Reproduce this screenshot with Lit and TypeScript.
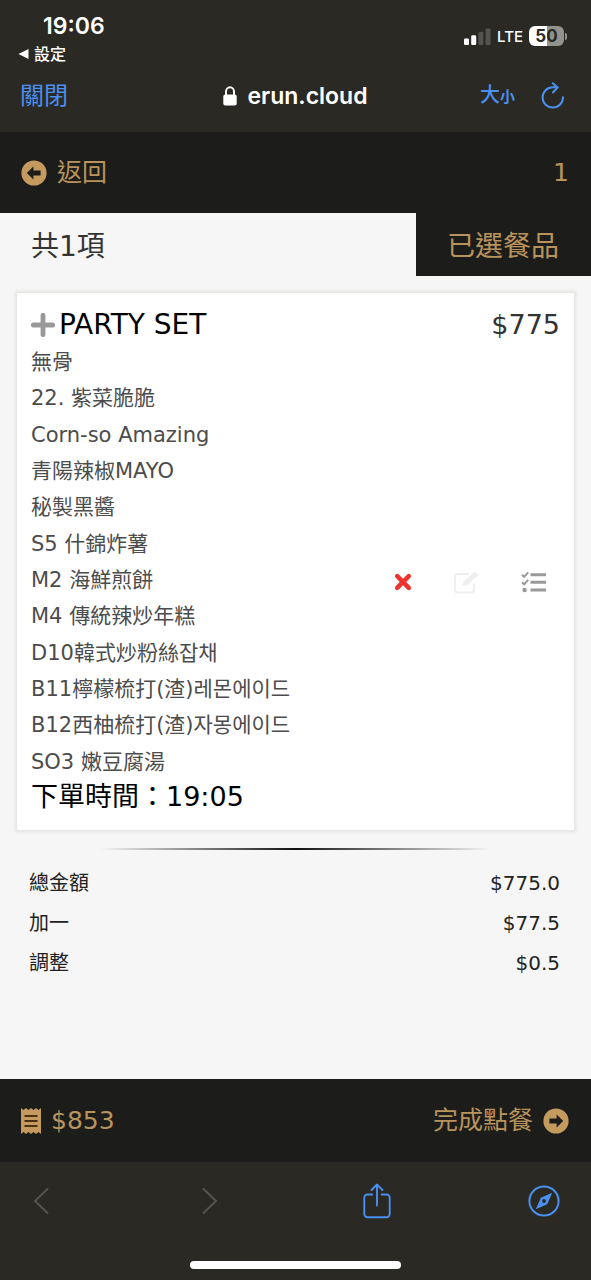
import { LitElement, html, css, svg } from "lit";
import { customElement, property } from "lit/decorators.js";

interface OrderItem {
  name: string;
  price: string;
  options: string[];
  time: string;
}

const ORDER: OrderItem = {
  name: "PARTY SET",
  price: "$775",
  options: [
    "無骨",
    "22. 紫菜脆脆",
    "Corn-so Amazing",
    "青陽辣椒MAYO",
    "秘製黑醬",
    "S5 什錦炸薯",
    "M2 海鮮煎餅",
    "M4 傳統辣炒年糕",
    "D10韓式炒粉絲잡채",
    "B11檸檬梳打(渣)레몬에이드",
    "B12西柚梳打(渣)자몽에이드",
    "SO3 嫩豆腐湯",
  ],
  time: "19:05",
};

const TOTALS = [
  { label: "總金額", value: "$775.0" },
  { label: "加一", value: "$77.5" },
  { label: "調整", value: "$0.5" },
];

const reset = css`
  :host {
    display: block;
  }
  * {
    box-sizing: border-box;
    margin: 0;
    padding: 0;
  }
  button {
    font: inherit;
    color: inherit;
    background: none;
    border: 0;
    cursor: pointer;
    display: flex;
    align-items: center;
  }
  a {
    color: inherit;
    text-decoration: none;
  }
  svg {
    display: block;
    flex: none;
  }
`;

const arrowCircle = svg`
  <circle cx="13" cy="13" r="12.6" fill="#c49a5f"></circle>
  <path d="M5.8 13 12.4 6.6V10.6H19.600V15.4H12.4V19.4Z" fill="#1c1d1a"></path>
`;

@customElement("browser-top")
class BrowserTop extends LitElement {
  static styles = [
    reset,
    css`
      :host {
        background: #2a2923;
        color: #fff;
        font-family: Inter, "Noto Sans CJK TC", sans-serif;
        height: 132px;
      }
      .status {
        display: flex;
        justify-content: space-between;
        height: 70px;
        padding: 12px 24px 0 18px;
      }
      .clock {
        font-size: 23px;
        line-height: 28px;
        font-weight: 600;
        padding-left: 25px;
      }
      .back {
        font-size: 16px;
        line-height: 28px;
        font-weight: 500;
        gap: 5px;
      }
      .signals {
        display: flex;
        align-items: center;
        gap: 6px;
        height: 48px;
        font-size: 15px;
        font-weight: 500;
      }
      .battery {
        display: flex;
        align-items: center;
        gap: 1px;
      }
      .cell {
        width: 35px;
        height: 20px;
        border-radius: 6px;
        background: linear-gradient(90deg, #fff 50%, #92928f 50%);
        color: #2a2923;
        font-size: 17px;
        line-height: 20px;
        font-weight: 700;
        text-align: center;
      }
      .nub {
        width: 2px;
        height: 7px;
        border-radius: 0 2px 2px 0;
        background: #92928f;
      }
      .bar {
        display: grid;
        grid-template-columns: 1fr auto 1fr;
        align-items: center;
        height: 52px;
        padding: 0 20px;
      }
      .link {
        color: #4a90f0;
        font-size: 24px;
        line-height: 36px;
      }
      .address {
        font-size: 23px;
        line-height: 32px;
        font-weight: 600;
        gap: 10px;
      }
      .tools {
        display: flex;
        justify-content: flex-end;
        align-items: center;
        gap: 26px;
        padding-right: 6px;
        color: #4a90f0;
      }
      .size {
        align-items: baseline;
        font-size: 20px;
        line-height: 32px;
        font-weight: 500;
      }
      .small {
        font-size: 15px;
        font-weight: 700;
      }
    `,
  ];

  render() {
    return html`
      <div class="status">
        <div>
          <div class="clock">19:06</div>
          <button class="back">
            <svg width="11" height="12" viewBox="0 0 11 12"><path d="M0.5 6 10.5 1V11Z" fill="#fff"></path></svg>
            設定
          </button>
        </div>
        <div class="signals">
          <svg width="27" height="17" viewBox="0 0 27 17">
            <rect x="0" y="10.5" width="5" height="6.5" rx="1.3" fill="#fff"></rect>
            <rect x="7.2" y="7.3" width="5" height="9.7" rx="1.3" fill="#fff"></rect>
            <rect x="14.4" y="4" width="5" height="13" rx="1.3" fill="#54534e"></rect>
            <rect x="21.6" y="0.5" width="5" height="16.5" rx="1.3" fill="#54534e"></rect>
          </svg>
          <span>LTE</span>
          <div class="battery"><div class="cell">50</div><div class="nub"></div></div>
        </div>
      </div>
      <div class="bar">
        <button class="link">關閉</button>
        <button class="address">
          <svg width="14" height="20" viewBox="0 0 14 20">
            <rect x="0.3" y="8.4" width="13.4" height="11" rx="2" fill="#fff"></rect>
            <path d="M3 9.500V5.600a4 4.300 0 0 1 8 0V9.500" fill="none" stroke="#fff" stroke-width="2"></path>
          </svg>
          erun.cloud
        </button>
        <div class="tools">
          <button class="size" aria-label="文字大小">大<span class="small">小</span></button>
          <button aria-label="重新載入">
            <svg width="24" height="28" viewBox="0 0 24 28" fill="none" stroke="#4a90f0" stroke-width="2" stroke-linecap="round" stroke-linejoin="round">
              <path d="M22 15.300A10.200 10.200 0 1 1 11.800 5.200H16.500"></path>
              <path d="M11.800 1.200 16.500 5.500 12 10.500"></path>
            </svg>
          </button>
        </div>
      </div>
    `;
  }
}

@customElement("browser-bottom")
class BrowserBottom extends LitElement {
  static styles = [
    reset,
    css`
      :host {
        background: #2a2923;
        height: 118px;
      }
      .nav {
        display: flex;
        justify-content: space-between;
        align-items: center;
        height: 77px;
        padding: 0 31px 0 26px;
      }
      .key {
        width: 32px;
        justify-content: center;
      }
      .indicator {
        width: 211px;
        height: 8px;
        margin: 22px auto 0;
        border-radius: 4px;
        background: #fff;
      }
    `,
  ];

  render() {
    return html`
      <nav class="nav">
        <button class="key" aria-label="上一頁">
          <svg width="20" height="28" viewBox="0 0 20 28"><path d="M15.500 2 3 14 15.500 26" fill="none" stroke="#55544f" stroke-width="2" stroke-linecap="round"></path></svg>
        </button>
        <button class="key" aria-label="下一頁">
          <svg width="20" height="28" viewBox="0 0 20 28"><path d="M4.500 2 17 14 4.500 26" fill="none" stroke="#55544f" stroke-width="2" stroke-linecap="round"></path></svg>
        </button>
        <button class="key" aria-label="分享">
          <svg width="28" height="36" viewBox="0 0 28 36" fill="none" stroke="#4a90f0" stroke-width="1.900" stroke-linecap="round" stroke-linejoin="round">
            <path d="M9.300 11.500H4.500a3.200 3.200 0 0 0-3.200 3.200V31a3.200 3.200 0 0 0 3.200 3.200H23.500a3.200 3.200 0 0 0 3.200-3.200V14.700a3.200 3.200 0 0 0-3.200-3.200H18.700"></path>
            <path d="M14 22.500V1.500M8.500 7 14 1.500 19.500 7"></path>
          </svg>
        </button>
        <button class="key" aria-label="Safari">
          <svg width="32" height="32" viewBox="0 0 32 32">
            <circle cx="16" cy="16" r="14.600" fill="none" stroke="#4a90f0" stroke-width="2"></circle>
            <path d="M24.200 7.800 19.200 19.200 7.800 24.200 12.800 12.800Z" fill="#4a90f0"></path>
            <circle cx="16" cy="16" r="1.900" fill="#2a2923"></circle>
          </svg>
        </button>
      </nav>
      <div class="indicator"></div>
    `;
  }
}

@customElement("order-card")
class OrderCard extends LitElement {
  @property({ attribute: false }) item: OrderItem = ORDER;

  static styles = [
    reset,
    css`
      .panel {
        background: #fff;
        box-shadow: 0 0 3px 2px #e6e4e2;
        padding: 13px 14px 16px;
      }
      .head {
        display: flex;
        align-items: center;
        justify-content: space-between;
        font-size: 27px;
        line-height: 38px;
        color: #333;
      }
      .name {
        display: flex;
        align-items: center;
        gap: 4px;
        font-size: 28px;
        font-weight: 400;
        color: #000;
      }
      .body {
        display: flex;
        align-items: center;
        justify-content: space-between;
      }
      .options {
        display: grid;
        grid-auto-rows: 1fr;
        align-items: center;
        min-height: 436px;
        list-style: none;
        font-size: 21px;
        line-height: 36px;
        color: #4c4c4c;
      }
      .time {
        font-size: 27px;
        line-height: 34px;
        color: #000;
      }
      .actions {
        display: flex;
        align-items: center;
        gap: 40px;
        padding: 6px 13px 0 0;
      }
    `,
  ];

  render() {
    const { name, price, options, time } = this.item;
    return html`
      <article class="panel">
        <div class="head">
          <h2 class="name">
            <svg width="24" height="24" viewBox="0 0 24 24"><path d="M12 2.300V21.700M2.300 12H21.700" stroke="#999" stroke-width="4.800" stroke-linecap="round"></path></svg>
            ${name}
          </h2>
          <span>${price}</span>
        </div>
        <div class="body">
          <div>
            <ul class="options">
              ${options.map((o) => html`<li>${o}</li>`)}
            </ul>
            <p class="time">下單時間：${time}</p>
          </div>
          <div class="actions">
            <button aria-label="刪除">
              <svg width="20" height="20" viewBox="0 0 20 20"><path d="M4.200 4.200 15.800 15.800M15.800 4.200 4.200 15.800" stroke="#ee3430" stroke-width="4.600" stroke-linecap="round"></path></svg>
            </button>
            <button aria-label="編輯">
              <svg width="28" height="26" viewBox="0 0 28 26" fill="none" stroke="#efefef" stroke-width="2.200">
                <path d="M16 5H4.500A2.500 2.500 0 0 0 2 7.500V21A2.500 2.500 0 0 0 4.500 23.500H18.500A2.500 2.500 0 0 0 21 21V14.500"></path>
                <path d="M9.500 17 10.500 12.500 21.500 2.500 25.500 6 14 16.500Z" fill="#efefef" stroke="none"></path>
              </svg>
            </button>
            <button aria-label="選項">
              <svg width="26" height="22" viewBox="0 0 26 22" fill="none" stroke="#999">
                <path d="M9.500 3.800H25M9.500 11.300H25M9.500 19H25" stroke-width="3"></path>
                <path d="M1 3.800 3.200 5.800 7.200 1.300M1 11.300 3.200 13.300 7.200 8.800" stroke-width="2"></path>
                <circle cx="3.600" cy="19" r="2.200" fill="#999" stroke="none"></circle>
              </svg>
            </button>
          </div>
        </div>
      </article>
    `;
  }
}

@customElement("app-root")
class AppRoot extends LitElement {
  static styles = [
    reset,
    css`
      :host {
        display: flex;
        flex-direction: column;
        min-height: 100vh;
        background: #f6f6f6;
        color: #222;
        font-family: "DejaVu Sans", "Noto Sans CJK TC", "Noto Sans CJK KR", sans-serif;
      }
      .bar {
        display: flex;
        align-items: center;
        justify-content: space-between;
        padding: 0 22px 0 21px;
        background: #1c1d1a;
        color: #b9935c;
        font-size: 25px;
        line-height: 36px;
      }
      .top {
        height: 81px;
      }
      .bottom {
        height: 83px;
      }
      .link {
        display: flex;
        align-items: center;
        gap: 10px;
      }
      .main {
        flex: 1;
      }
      .tabs {
        display: flex;
        justify-content: space-between;
        font-size: 28px;
        line-height: 59px;
      }
      .count {
        padding: 4px 0 0 31px;
        font-size: 28px;
        font-weight: 400;
        color: #333;
      }
      .tab {
        padding: 4px 32px 0 31px;
        background: #1c1d1a;
        color: #b9935c;
      }
      .card {
        margin: 17px 17px 0;
      }
      .rule {
        width: 66%;
        height: 2px;
        margin: 18px auto 13px;
        border: 0;
        background: linear-gradient(90deg, transparent, #111 50%, transparent);
      }
      .totals {
        padding: 0 31px 0 29px;
        font-size: 20px;
        line-height: 40px;
      }
      .row {
        display: flex;
        justify-content: space-between;
      }
    `,
  ];

  render() {
    return html`
      <browser-top></browser-top>
      <header class="bar top">
        <button class="link">
          <svg width="26" height="26" viewBox="0 0 26 26">${arrowCircle}</svg>
          返回
        </button>
        <span>1</span>
      </header>
      <main class="main">
        <div class="tabs">
          <h1 class="count">共1項</h1>
          <button class="tab">已選餐品</button>
        </div>
        <order-card class="card" .item=${ORDER}></order-card>
        <hr class="rule" />
        <dl class="totals">
          ${TOTALS.map(
            (t) => html`<div class="row"><dt>${t.label}</dt><dd>${t.value}</dd></div>`
          )}
        </dl>
      </main>
      <footer class="bar bottom">
        <a class="link" href="#bill">
          <svg width="20" height="26" viewBox="0 0 20 26">
            <path d="M0 0 2.500 2 5 0 7.500 2 10 0 12.500 2 15 0 17.500 2 20 0V26L17.500 24 15 26 12.500 24 10 26 7.500 24 5 26 2.500 24 0 26Z" fill="#c49a5f"></path>
            <path d="M3.500 8H16.500M3.500 13H16.500M3.500 18H16.500" stroke="#4a3016" stroke-width="1.800"></path>
          </svg>
          $853
        </a>
        <button class="link">
          完成點餐
          <svg width="26" height="26" viewBox="0 0 26 26"><g transform="rotate(180 13 13)">${arrowCircle}</g></svg>
        </button>
      </footer>
      <browser-bottom></browser-bottom>
    `;
  }
}
